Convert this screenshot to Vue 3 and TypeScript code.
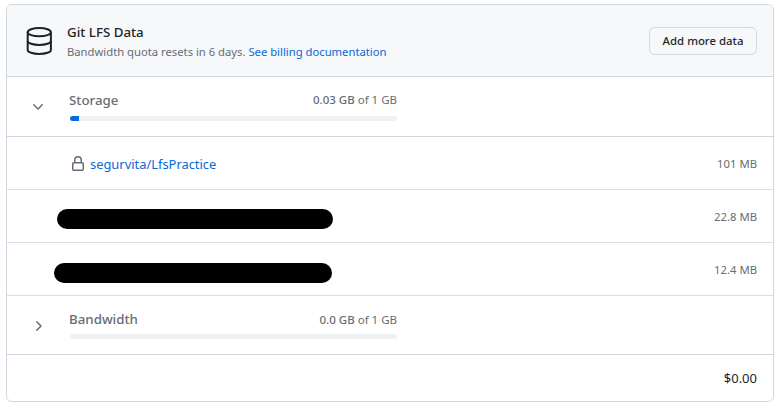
<script setup lang="ts">
const repos = [
  { blob: 'blob-a', size: '22.8 MB' },
  { blob: 'blob-b', size: '12.4 MB' },
]
</script>

<template>
  <div class="page">
    <section class="box">
      <header class="head">
        <svg class="db" viewBox="0 0 28 28" width="28" height="28" fill="none" stroke="#1f2328" stroke-width="2">
          <ellipse cx="14.3" cy="5.2" rx="11.6" ry="4.1" />
          <path d="M2.7 5.2v17.7c0 2.3 5.2 4.1 11.6 4.1s11.6-1.8 11.6-4.1V5.2" />
          <path d="M2.7 13.9c0 2.3 5.2 4.1 11.6 4.1s11.6-1.8 11.6-4.1" />
        </svg>
        <div class="head-text">
          <div class="title">Git LFS Data</div>
          <div class="sub">Bandwidth quota resets in 6 days. <a class="link">See billing documentation</a></div>
        </div>
        <button class="btn">Add more data</button>
      </header>

      <div class="meter-row storage">
        <svg class="chev" viewBox="0 0 16 16" width="16" height="16"><path d="M12.78 5.22a.749.749 0 0 1 0 1.06l-4.25 4.25a.749.749 0 0 1-1.06 0L3.22 6.28a.749.749 0 1 1 1.06-1.06L8 8.939l3.72-3.719a.749.749 0 0 1 1.06 0Z" /></svg>
        <div class="meter">
          <div class="meter-top">
            <span class="meter-name">Storage</span>
            <span class="usage"><b>0.03 GB</b> of 1 GB</span>
          </div>
          <div class="track"><div class="fill"></div></div>
        </div>
      </div>

      <div class="row repo">
        <svg class="lock" viewBox="0 0 16 16" width="16" height="16"><path d="M4 4a4 4 0 0 1 8 0v2h.25c.966 0 1.75.784 1.75 1.75v5.5A1.75 1.75 0 0 1 12.25 15h-8.5A1.75 1.75 0 0 1 2 13.25v-5.5C2 6.784 2.784 6 3.75 6H4Zm8.25 3.5h-8.5a.25.25 0 0 0-.25.25v5.5c0 .138.112.25.25.25h8.5a.25.25 0 0 0 .25-.25v-5.5a.25.25 0 0 0-.25-.25ZM10.5 6V4a2.5 2.5 0 1 0-5 0v2Z" /></svg>
        <a class="repo-link">segurvita/LfsPractice</a>
        <span class="size">101 MB</span>
      </div>

      <div v-for="r in repos" :key="r.size" class="row">
        <div class="blob" :class="r.blob"></div>
        <span class="size">{{ r.size }}</span>
      </div>

      <div class="meter-row bandwidth">
        <svg class="chev" viewBox="0 0 16 16" width="16" height="16"><path d="M6.22 3.22a.75.75 0 0 1 1.06 0l4.25 4.25a.75.75 0 0 1 0 1.06l-4.25 4.25a.751.751 0 0 1-1.042-.018.751.751 0 0 1-.018-1.042L9.94 8 6.22 4.28a.75.75 0 0 1 0-1.06Z" /></svg>
        <div class="meter">
          <div class="meter-top">
            <span class="meter-name">Bandwidth</span>
            <span class="usage"><b>0.0 GB</b> of 1 GB</span>
          </div>
          <div class="track"></div>
        </div>
      </div>

      <footer class="foot">$0.00</footer>
    </section>
  </div>
</template>

<style scoped>
.page {
  width: 782px;
  height: 408px;
  padding: 4px 8px 0 6px;
  box-sizing: border-box;
  background: #fff;
  font-family: "Noto Sans", "Liberation Sans", sans-serif;
  color: #1f2328;
}
.box {
  height: 398px;
  box-sizing: border-box;
  border: 1px solid #d0d7de;
  border-radius: 6px;
  overflow: hidden;
  display: flex;
  flex-direction: column;
}
.head {
  height: 72px;
  flex: none;
  box-sizing: border-box;
  background: #f6f8fa;
  border-bottom: 1px solid #d0d7de;
  display: flex;
  align-items: center;
  padding: 0 16px 0 18px;
}
.db {
  flex: none;
  margin: 0 14px 0 0;
}
.head-text {
  flex: 1;
  padding-top: 1px;
}
.title {
  font-size: 13.3px;
  line-height: 20px;
  font-weight: 500;
}
.sub {
  font-size: 11.25px;
  line-height: 19px;
  color: #656d76;
}
.link,
.repo-link {
  color: #0969da;
}
.btn {
  width: 108px;
  height: 28px;
  padding: 0;
  border: 1px solid #d5d9de;
  border-radius: 6px;
  background: #f6f8fa;
  font: 500 11.4px/20px "Noto Sans", "Liberation Sans", sans-serif;
  color: #24292f;
}
.meter-row {
  flex: none;
  box-sizing: border-box;
  border-bottom: 1px solid #d0d7de;
  display: flex;
  align-items: center;
  padding-left: 23px;
}
.storage {
  height: 60px;
}
.storage .meter-top {
  padding-bottom: 6px;
}
.bandwidth {
  height: 59px;
}
.chev {
  flex: none;
  fill: #656d76;
  margin: 1px 0 0;
}
.meter {
  width: 328px;
  margin-left: 23px;
}
.meter-top {
  display: flex;
  justify-content: space-between;
  align-items: center;
  height: 20px;
  padding-bottom: 4px;
  box-sizing: border-box;
}
.meter-name {
  font-size: 13.3px;
  font-weight: 500;
  color: #656d76;
}
.usage {
  font-size: 11.5px;
  color: #656d76;
}
.usage b {
  font-weight: 500;
}
.track {
  height: 5px;
  margin: 3px 0 0 1px;
  border-radius: 3px;
  background: #eff1f3;
  overflow: hidden;
}
.fill {
  width: 9px;
  height: 100%;
  background: #0969da;
}
.row {
  flex: none;
  height: 53px;
  box-sizing: border-box;
  border-bottom: 1px solid #d8dee4;
  display: flex;
  align-items: center;
  padding-right: 16px;
}
.repo {
  padding-left: 63px;
}
.lock {
  flex: none;
  fill: #656d76;
  margin: 2px 4px 0 0;
}
.repo-link {
  font-size: 12.9px;
  padding-top: 1px;
}
.size {
  margin-left: auto;
  font-size: 11.3px;
  color: #656d76;
}
.blob {
  height: 20px;
  border-radius: 10px;
  background: #000;
}
.blob-a {
  width: 276px;
  margin: 6px 0 0 50px;
}
.blob-b {
  width: 278px;
  margin: 7px 0 0 47px;
}
.foot {
  flex: 1;
  display: flex;
  align-items: center;
  justify-content: flex-end;
  padding-right: 16px;
  font-size: 13px;
  font-weight: 400;
}
</style>
